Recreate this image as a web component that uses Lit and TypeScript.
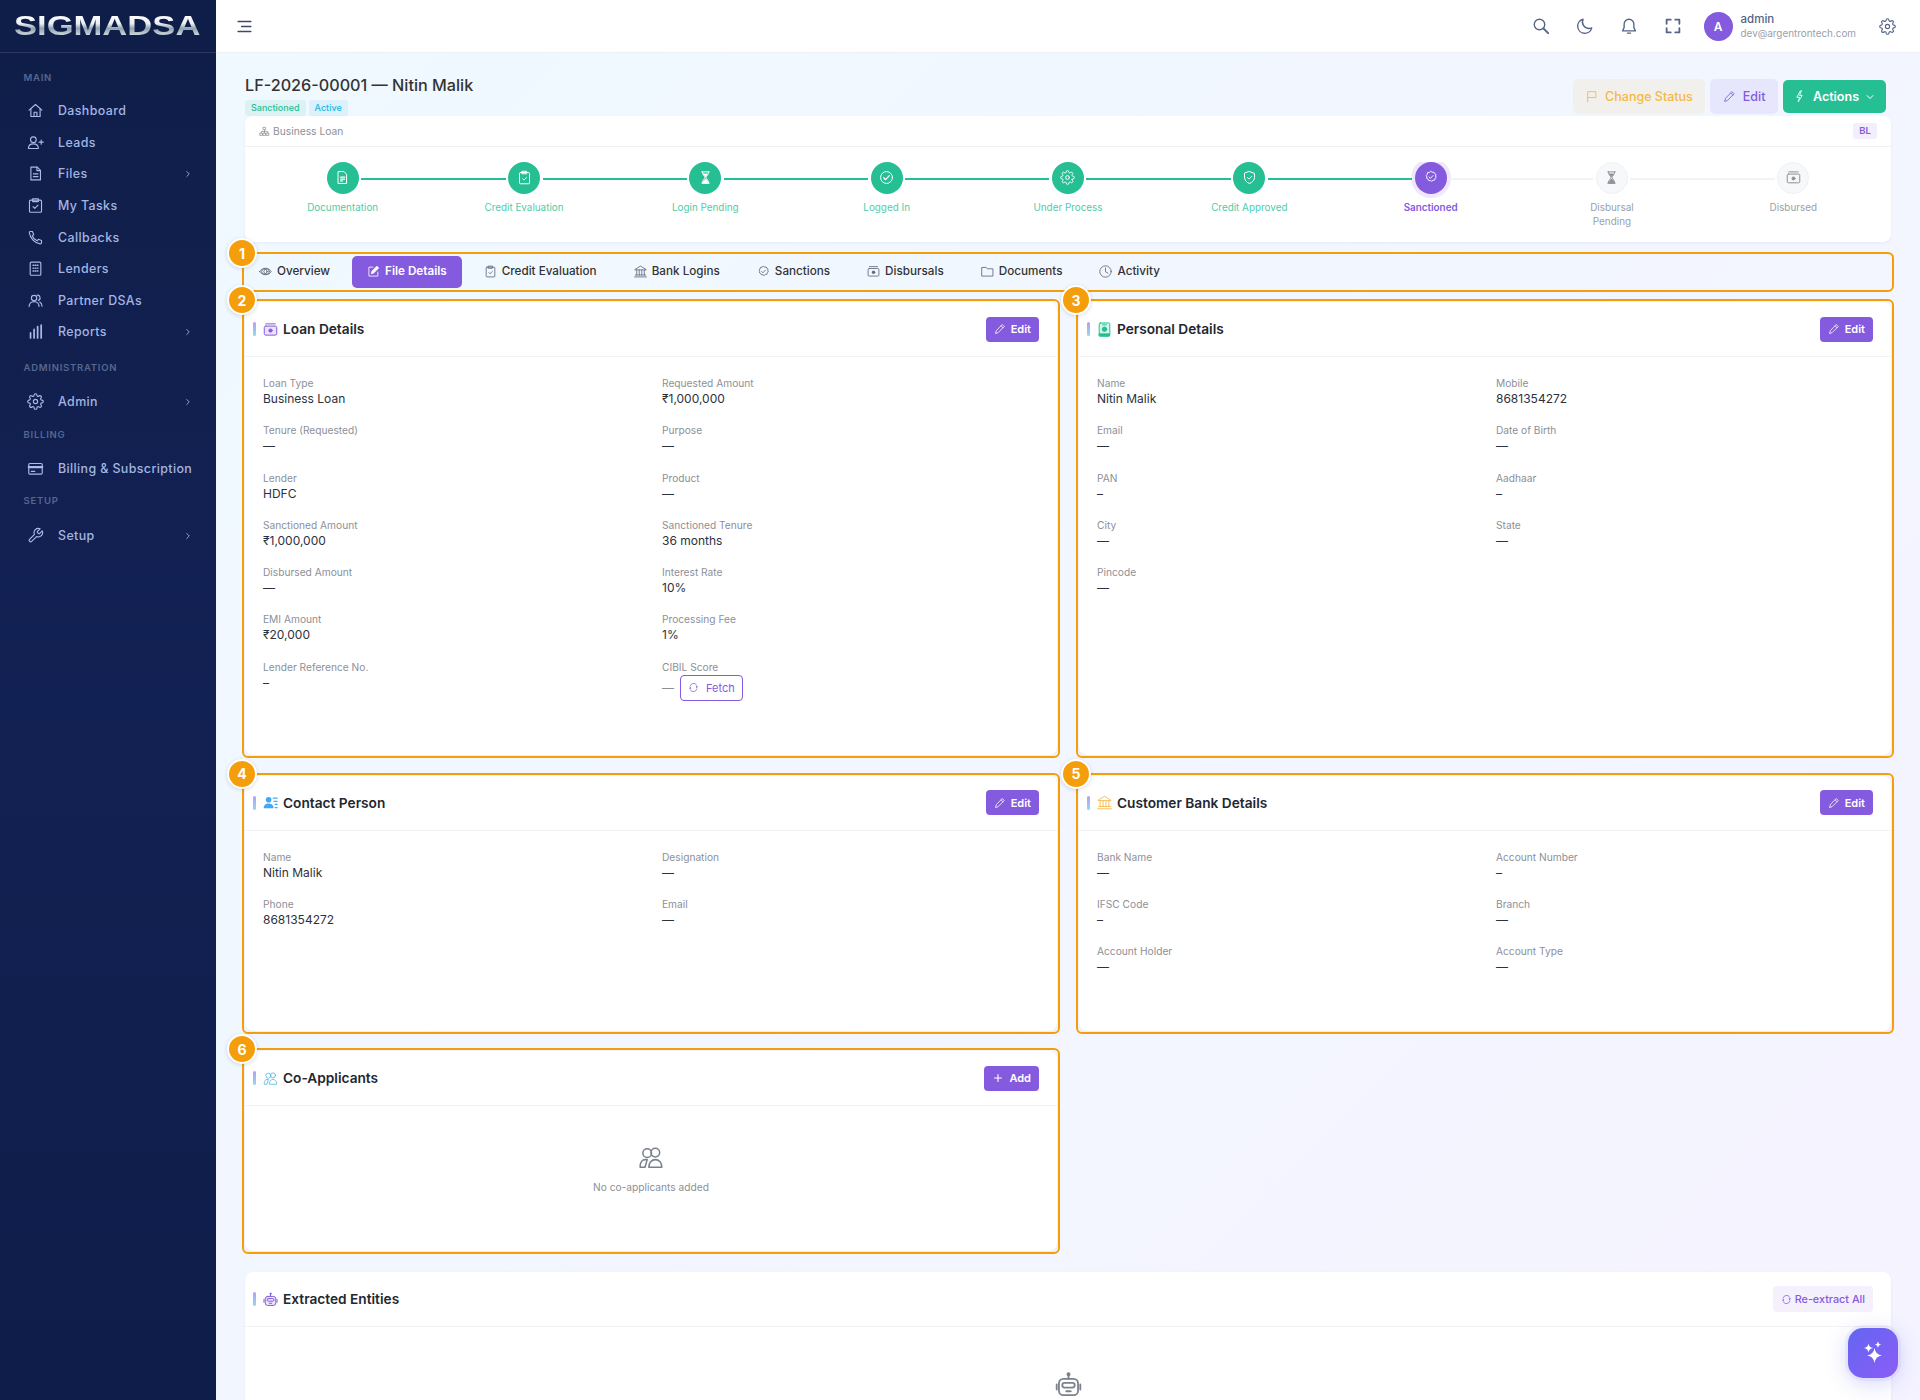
import { LitElement, html, css, svg } from "lit";
import { customElement } from "lit/decorators.js";

const star = (x: number, y: number, r: number) =>
  `M${x} ${y - r}Q${x + r * 0.12} ${y - r * 0.12} ${x + r} ${y}Q${x + r * 0.12} ${y + r * 0.12} ${x} ${y + r}Q${x - r * 0.12} ${y + r * 0.12} ${x - r} ${y}Q${x - r * 0.12} ${y - r * 0.12} ${x} ${y - r}Z`;

const gearPath = "M19.4 15a1.65 1.65 0 0 0 .33 1.82l.06.06a2 2 0 0 1 0 2.83 2 2 0 0 1-2.83 0l-.06-.06a1.65 1.65 0 0 0-1.82-.33 1.65 1.65 0 0 0-1 1.51V21a2 2 0 0 1-2 2 2 2 0 0 1-2-2v-.09A1.65 1.65 0 0 0 9 19.4a1.65 1.65 0 0 0-1.82.33l-.06.06a2 2 0 0 1-2.83 0 2 2 0 0 1 0-2.83l.06-.06a1.65 1.65 0 0 0 .33-1.82 1.65 1.65 0 0 0-1.51-1H3a2 2 0 0 1-2-2 2 2 0 0 1 2-2h.09A1.65 1.65 0 0 0 4.6 9a1.65 1.65 0 0 0-.33-1.82l-.06-.06a2 2 0 0 1 0-2.83 2 2 0 0 1 2.83 0l.06.06a1.65 1.65 0 0 0 1.82.33H9a1.65 1.65 0 0 0 1-1.51V3a2 2 0 0 1 2-2 2 2 0 0 1 2 2v.09a1.65 1.65 0 0 0 1 1.51 1.65 1.65 0 0 0 1.82-.33l.06-.06a2 2 0 0 1 2.83 0 2 2 0 0 1 0 2.83l-.06.06a1.65 1.65 0 0 0-.33 1.82V9a1.65 1.65 0 0 0 1.51 1H21a2 2 0 0 1 2 2 2 2 0 0 1-2 2h-.09a1.65 1.65 0 0 0-1.51 1z";

const bankIcon = svg`<path d="M1.500 8.500 12 2l10.500 6.500M2.500 9h19M5 9.500v9M9.700 9.500v9M14.300 9.500v9M19 9.500v9M2.500 18.500h19M1 22h22"/>`;
const moneyIcon = svg`<rect x="2" y="6.500" width="20" height="14" rx="2"/><path d="M4.500 3h15"/><circle cx="12" cy="13.500" r="2.400" fill="currentColor"/>`;
const hourglass = svg`<path d="M6 3h12M6 21h12M7 3c0 5 4 6.500 4 9s-4 4-4 9h10c0-5-4-6.500-4-9s4-4 4-9"/><path d="M8.500 20c.5-3 3.500-4.500 3.500-5.500s3 2.500 3.500 5.500zM9 6.500h6c-1 2-2.500 3-3 4-.5-1-2-2-3-4z" fill="currentColor"/>`;
const sealCheck = svg`<path d="M12 2.500l2.300 1.400 2.700-.2 1.100 2.400 2.300 1.400-.5 2.700.9 2.500-2 1.900-.6 2.600-2.700.4-2.100 1.800-2.400-1.300-2.700.1-1.300-2.400-2.400-1.300.2-2.700-1-2.500 1.900-2 .4-2.700 2.700-.5z"/><path d="M8.500 12l2.400 2.400 4.500-4.800"/>`;

const ICONS: Record<string, unknown> = {
  home: svg`<path d="M3 11.500 12 3.500l9 8"/><path d="M5.500 10v10.500h13V10"/><path d="M10 20.500v-6h4v6"/>`,
  userplus: svg`<circle cx="9" cy="8" r="4"/><path d="M2 20.500c0-4 3-6.500 7-6.500s7 2.500 7 6.500z"/><path d="M20 8.500v6M17 11.500h6"/>`,
  file: svg`<path d="M5.500 3h9l4.500 4.500V21h-13.500z"/><path d="M14 3v5h5M9 12.500h6.500M9 16.500h6.500"/>`,
  task: svg`<rect x="3.500" y="4.500" width="17" height="17" rx="1.500"/><path d="M8 2.500h8v4H8zM8.500 13.500l2.500 2.500 4.500-4.500"/>`,
  phone: svg`<path d="M4.500 3.500h3.200l1.800 4.500-2 1.800c1 2.800 3.600 5.500 6.700 6.900l1.900-2.100 4.400 1.700v3.200c0 1-1 1.700-2 1.500C11 19.800 4.300 13 3.300 5.300c-.1-.9.300-1.800 1.200-1.800z"/>`,
  lenders: svg`<rect x="4.500" y="3" width="15" height="18.500" rx="1.500"/><path d="M8.500 7.500h1M11.500 7.500h1M14.500 7.500h1M8.500 11.500h1M11.500 11.500h1M14.500 11.500h1M8.500 15.500h1M11.500 15.500h1M14.500 15.500h1" stroke-width="2"/>`,
  people: svg`<circle cx="10" cy="8.500" r="3.800"/><path d="M3 20.500c0-4 3-7 7-7s7 3 7 7"/><path d="M14 4.500a3.800 3.800 0 0 1 2 7.300M18 14c2 1 3.200 3.400 3.200 6"/>`,
  bars: svg`<path d="M5 21v-7M10 21V9M15 21V5M20 21V3" stroke-width="2.400"/>`,
  gear: svg`<circle cx="12" cy="12" r="3"/><path d="${gearPath}"/>`,
  card: svg`<rect x="2.500" y="5" width="19" height="15" rx="1.500"/><path d="M2.500 10h19" stroke-width="3.200"/><path d="M6 16h5"/>`,
  wrench: svg`<path d="M14.700 6.300a1 1 0 0 0 0 1.400l1.600 1.600a1 1 0 0 0 1.400 0l3.770-3.770a6 6 0 0 1-7.940 7.940l-6.910 6.910a2.120 2.120 0 0 1-3-3l6.910-6.910a6 6 0 0 1 7.940-7.940l-3.760 3.760z"/>`,
  chev: svg`<path d="M9 6l6 6-6 6"/>`,
  chevd: svg`<path d="M6 9l6 6 6-6"/>`,
  eye: svg`<path d="M1.500 12c2.500-4 6-6 10.500-6s8 2 10.500 6c-2.500 4-6 6-10.500 6s-8-2-10.500-6z"/><circle cx="10" cy="12" r="5"/><circle cx="14" cy="12" r="5"/>`,
  editsq: svg`<path d="M11 4H3.500v16.500H20V13"/><path d="M18.500 2.500l3 3L12 15l-4 1 1-4z" fill="currentColor"/>`,
  clip: svg`<rect x="4" y="4" width="16" height="18" rx="1.500"/><path d="M8.500 2h7v4h-7zM9 14l2.200 2.200 4-4.200"/>`,
  bank: bankIcon,
  seal: sealCheck,
  money: moneyIcon,
  loan: svg`<rect x="2" y="6.500" width="20" height="14.500" rx="2.500" fill="currentColor" fill-opacity=".16"/><path d="M4.500 3h15"/><circle cx="12" cy="13.700" r="2.600" fill="currentColor"/>`,
  folder: svg`<path d="M2 4.500h7.500l2 2.500H22v13.500H2z"/>`,
  clock: svg`<circle cx="12" cy="12" r="10.500"/><path d="M12 5.500v7l4.500 2.500"/>`,
  doc: svg`<path d="M5.500 2.500h9l4 4.500v14.500h-13z"/><path d="M9 11.500h6.500M9 14.500h6.500M9 17.500h3" stroke-width="2"/>`,
  hourglass,
  circheck: svg`<circle cx="12" cy="12" r="9.500"/><path d="M7.500 12.500l3 3 6-6.500" stroke-width="2"/>`,
  shield: svg`<path d="M12 2.500 20 5.500v6c0 5-3.500 8.500-8 10-4.500-1.500-8-5-8-10v-6z"/><path d="M8.500 12l2.500 2.500 4.500-4.500"/>`,
  search: svg`<circle cx="10" cy="10" r="7"/><path d="M15.500 15.500 21.500 21.500" stroke-width="2.600"/>`,
  moon: svg`<path d="M9.500 3a9.500 9.500 0 1 0 11.500 11.500c-1.200.6-2.500.8-3.800.8A8.500 8.500 0 0 1 9.500 3z"/>`,
  bell: svg`<path d="M12 3a6.500 6.500 0 0 0-6.500 6.500V14L3.500 18.500h17L18.500 14V9.500A6.500 6.500 0 0 0 12 3z"/><path d="M10 21.500h4"/>`,
  full: svg`<path d="M3.500 9V3.500H9M15 3.500h5.500V9M20.500 15v5.500H15M9 20.500H3.500V15" stroke-width="2.400"/>`,
  flag: svg`<path d="M5 22V3h15v11H5"/>`,
  pencil: svg`<path d="M17 3.500l3.500 3.500L8 19.500l-5 1.500 1.500-5z"/><path d="M14.500 6l3.500 3.500"/>`,
  bolt: svg`<path d="M13.500 2 7 13.500h5L9.500 22 17 10h-5l3.500-8z"/>`,
  sitemap: svg`<rect x="9.500" y="3" width="5" height="5"/><rect x="2.500" y="15.500" width="5" height="5"/><rect x="9.500" y="15.500" width="5" height="5"/><rect x="16.500" y="15.500" width="5" height="5"/><path d="M12 8v7.500M5 15.500V12h14v3.500"/>`,
  refresh: svg`<path d="M4.500 9a8 8 0 0 1 14-3M19.500 15a8 8 0 0 1-14 3"/><path d="M18.500 12.500l2-2.500-2.500-1M5.500 11.500l-2 2.500 2.500 1" stroke-width="2"/>`,
  personal: svg`<rect x="3.500" y="1.500" width="17" height="21" rx="2" fill="#d5f4ea"/><path d="M4 19h16v3.500H4z" fill="currentColor"/><path d="M9 4.500h6" /><circle cx="12" cy="11.500" r="3.500" fill="currentColor"/>`,
  contact: svg`<circle cx="9" cy="7.500" r="4.500" fill="currentColor" stroke="none"/><path d="M1 21c0-5 3-7.500 8-7.500s8 2.500 8 7.500z" fill="currentColor" stroke="none"/><path d="M16.500 5h6M17.500 10h5M19.500 15h3M19.500 20h3" stroke-width="2"/>`,
  users: svg`<circle cx="8.500" cy="7.500" r="4"/><circle cx="16" cy="7" r="4"/><path d="M2 20.500v-1.500c0-3 2-5.500 4.500-5.500h2l-2 7zM10 20.500c0-4 2.500-7 6-7s6 3 6 7z"/>`,
  robot: svg`<rect x="3.500" y="7" width="17" height="14.500" rx="4" fill="#ede7fb"/><rect x="6.500" y="10.500" width="11" height="4.200" rx="2"/><path d="M10 18h4M12 7V3.500M1.500 12v4.500M22.500 12v4.500"/><circle cx="12" cy="2.800" r="1" fill="currentColor"/>`,
  robotg: svg`<rect x="3.500" y="7" width="17" height="14.500" rx="4"/><rect x="6.500" y="10.500" width="11" height="4.200" rx="2"/><path d="M10 18h4M12 7V3.500M1.500 12v4.500M22.500 12v4.500"/><circle cx="12" cy="2.800" r="1" fill="currentColor"/>`,
  menu: svg`<path d="M3 5h18M8 12h13M3 19h18" stroke-width="2"/>`,
  plus: svg`<path d="M12 5v14M5 12h14" stroke-width="2.200"/>`,
};

const ic = (name: string, cls = "") =>
  html`<svg class="ic ${cls}" viewBox="0 0 24 24" fill="none" stroke="currentColor" stroke-width="1.600" stroke-linecap="round" stroke-linejoin="round" aria-hidden="true">${ICONS[name]}</svg>`;

const NAV = [
  { t: "MAIN", cls: "s0", items: [["home", "Dashboard"], ["userplus", "Leads"], ["file", "Files", 1], ["task", "My Tasks"], ["phone", "Callbacks"], ["lenders", "Lenders"], ["people", "Partner DSAs"], ["bars", "Reports", 1]] },
  { t: "ADMINISTRATION", cls: "s1", items: [["gear", "Admin", 1]] },
  { t: "BILLING", cls: "s2", items: [["card", "Billing & Subscription"]] },
  { t: "SETUP", cls: "s3", items: [["wrench", "Setup", 1]] },
] as { t: string; cls: string; items: [string, string, number?][] }[];

const STEPS = [
  ["doc", "Documentation", "done"], ["clip", "Credit Evaluation", "done"], ["hourglass", "Login Pending", "done"],
  ["circheck", "Logged In", "done"], ["gear", "Under Process", "done"], ["shield", "Credit Approved", "done"],
  ["seal", "Sanctioned", "cur"], ["hourglass", "Disbursal Pending", "todo"], ["money", "Disbursed", "todo"],
];

const TABS: [string, string, boolean?][] = [
  ["eye", "Overview"], ["editsq", "File Details", true], ["clip", "Credit Evaluation"], ["bank", "Bank Logins"],
  ["seal", "Sanctions"], ["money", "Disbursals"], ["folder", "Documents"], ["clock", "Activity"],
];

const D = "—", N = "–";
const LOAN: [string, string][] = [
  ["Loan Type", "Business Loan"], ["Requested Amount", "₹1,000,000"], ["Tenure (Requested)", D], ["Purpose", D],
  ["Lender", "HDFC"], ["Product", D], ["Sanctioned Amount", "₹1,000,000"], ["Sanctioned Tenure", "36 months"],
  ["Disbursed Amount", D], ["Interest Rate", "10%"], ["EMI Amount", "₹20,000"], ["Processing Fee", "1%"],
  ["Lender Reference No.", N],
];
const PERSONAL: [string, string][] = [
  ["Name", "Nitin Malik"], ["Mobile", "8681354272"], ["Email", D], ["Date of Birth", D], ["PAN", N], ["Aadhaar", N],
  ["City", D], ["State", D], ["Pincode", D],
];
const CONTACT: [string, string][] = [["Name", "Nitin Malik"], ["Designation", D], ["Phone", "8681354272"], ["Email", D]];
const BANK: [string, string][] = [
  ["Bank Name", D], ["Account Number", N], ["IFSC Code", N], ["Branch", D], ["Account Holder", D], ["Account Type", D],
];

@customElement("app-root")
export class AppRoot extends LitElement {
  static styles = css`
    :host { display: block; height: 100vh; overflow: hidden; font-family: Inter, "Noto Sans", sans-serif; color: #333; }
    * { box-sizing: border-box; }
    .ic { width: 1em; height: 1em; flex: none; display: block; }
    .app { display: flex; height: 100%; }

    .side { width: 216px; flex: none; background: linear-gradient(180deg, #0f1e48 0%, #122153 45%, #0f1d4a 100%); color: #a4b5e2; }
    .logo { height: 53px; display: flex; align-items: center; padding-left: 14px; border-bottom: 1px solid rgba(255,255,255,.12); overflow: hidden; }
    .logo span { font-family: "Liberation Sans", sans-serif; font-weight: 700; font-size: 28px; line-height: 30px; display: inline-block; transform: scaleX(1.235); transform-origin: left center;
      background: linear-gradient(180deg, #ffffff 12%, #e9eef2 42%, #8fa2b0 58%, #e3e8ec 88%); -webkit-background-clip: text; background-clip: text; color: transparent; }
    .sec { font-size: 9.5px; font-weight: 600; letter-spacing: .75px; color: #56678f; height: 15px; line-height: 15px; padding-left: 23.500px; margin-bottom: 10px; }
    .s0 { margin-top: 17px; }
    .s1 { margin-top: 12px; margin-bottom: 11px; }
    .s2 { margin-top: 10px; }
    .s3 { margin-top: 9px; margin-bottom: 12px; }
    .nav { height: 31.6px; display: flex; align-items: center; padding-left: 27px; padding-right: 23px; font-size: 12.4px; letter-spacing: .4px; font-weight: 500; white-space: nowrap; }
    .nav .ic { font-size: 17px; margin-right: 14px; color: #a9bbe9; }
    .nav .lbl { flex: 1; }
    .nav .chev { font-size: 10px; margin: 0; stroke-width: 2; }

    .right { flex: 1; min-width: 0; display: flex; flex-direction: column; }
    .top { height: 53px; flex: none; background: #fff; border-bottom: 1px solid #eef0f4; display: flex; align-items: center; padding: 0 24px 0 20px; color: #536485; }
    .top .burger { font-size: 17px; margin-right: auto; color: #3c4a68; }
    .top .ti { font-size: 18px; margin-left: 26px; stroke-width: 1.8; }
    .top .ti.first { margin-left: 0; }
    .avatar { width: 29px; height: 29px; border-radius: 50%; background: #845adf; color: #fff; display: flex; align-items: center; justify-content: center; font-size: 12px; font-weight: 600; margin-left: 22px; }
    .who { margin-left: 8px; display: flex; flex-direction: column; gap: 1px; }
    .who b { font-size: 11.5px; line-height: 14px; font-weight: 500; color: #536485; }
    .who small { font-size: 9.9px; line-height: 13px; color: #9aa0ab; }
    .top .cog { font-size: 17px; margin-left: 23px; }

    .main { flex: 1; overflow: hidden; background: linear-gradient(135deg, #f0f9ff 0%, #f5f3ff 100%); padding: 21px 29px 0; }
    .head { display: flex; justify-content: space-between; padding-right: 5px; }
    h1 { margin: 0; font-size: 16.2px; font-weight: 500; line-height: 22px; color: #333; }
    .badges { display: flex; gap: 3px; margin-top: 4px; }
    .bdg { font-size: 9px; line-height: 16px; height: 16px; padding: 0 6px; border-radius: 3px; font-weight: 500; }
    .bdg.g { background: rgba(38,191,148,.1); color: #26bf94; }
    .bdg.b { background: rgba(35,183,229,.1); color: #23b7e5; }
    .acts { display: flex; gap: 5px; align-items: center; margin-top: 5px; height: 35px; }
    .btn { display: inline-flex; align-items: center; height: 35px; padding: 0 12.5px; border-radius: 5px; font-size: 12.5px; font-weight: 500; gap: 7px; white-space: nowrap; }
    .btn .ic { font-size: 13px; }
    .btn.w { background: rgba(245,184,73,.1); color: #f5b849; }
    .btn.p { background: rgba(132,90,223,.1); color: #845adf; }
    .btn.s { background: #26bf94; color: #fff; font-weight: 600; height: 33px; padding: 0 10px; }
    .btn.s .cd { font-size: 12px; stroke-width: 2; margin-left: -2px; }

    .card { background: #fff; border-radius: 8px; box-shadow: 0 1px 3px rgba(30,40,80,.06); }
    .pipe-top { height: 31px; display: flex; align-items: center; justify-content: space-between; padding: 0 14px; border-bottom: 1px solid #f0f1f4; font-size: 10.25px; color: #8c9097; }
    .pipe-top .l { display: flex; align-items: center; gap: 3px; }
    .pipe-top .ic { font-size: 11px; }
    .bl { background: rgba(132,90,223,.1); color: #845adf; font-weight: 600; font-size: 9.5px; height: 16px; line-height: 16px; padding: 0 6px; border-radius: 3px; }
    .pipe { padding: 15px 7px 13.500px; }
    .steps { display: flex; overflow: hidden; }
    .step { flex: 1; display: flex; flex-direction: column; align-items: center; min-width: 0; }
    .rail { display: flex; align-items: center; width: 100%; }
    .line { flex: 1; height: 2px; background: #f2f3f5; margin-top: 1px; }
    .line.on { background: #26bf94; }
    .line.off { visibility: hidden; }
    .dot { width: 32px; height: 32px; border-radius: 50%; margin: 0 2.500px; display: flex; align-items: center; justify-content: center; font-size: 15px; flex: none; }
    .dot .ic { margin-bottom: 2px; }
    .done .dot { background: #26bf94; color: #fff; }
    .cur .dot { background: #845adf; color: #fff; box-shadow: 0 0 0 4px rgba(132,90,223,.14); }
    .cur .dot .ic { font-size: 14px; }
    .todo .dot { background: #f7f8f9; color: #8c9097; border: 1px solid #eff0f3; }
    .slabel { font-size: 9.9px; line-height: 13.500px; margin-top: 7px; text-align: center; max-width: 72px; }
    .done .slabel { color: #4fcca9; max-width: 90px; }
    .cur .slabel { color: #845adf; font-weight: 600; }
    .todo .slabel { color: #9aa0ab; }

    .zone { position: relative; }
    .zone > .card { height: 100%; }
    .anno { position: absolute; inset: -3px; border: 2px solid #f59e0b; border-radius: 6px; pointer-events: none; z-index: 2; }
    .num { position: absolute; left: -17px; top: -16px; width: 30px; height: 30px; border-radius: 50%; background: #f59e0b; border: 2px solid #fff; color: #fff; font-size: 14px; font-weight: 700; display: flex; align-items: center; justify-content: center; box-shadow: 0 1px 4px rgba(0,0,0,.14); }

    .tabzone { margin-top: 13.500px; }
    .tabs { display: flex; gap: 7px; padding: 1px 0; margin-left: -1px; height: 34px; }
    .tab { display: flex; align-items: center; gap: 5px; height: 32px; padding: 0 15px 2px; border-radius: 5px; font-size: 11.7px; font-weight: 500; color: #333; white-space: nowrap; }
    .tab .ic { font-size: 13px; color: #5a6478; stroke-width: 1.5; }
    .tab.on { background: #845adf; color: #fff; font-weight: 600; }
    .tab.on .ic { color: #fff; }

    .grid { display: grid; grid-template-columns: 1fr 1fr; column-gap: 22px; row-gap: 20.500px; margin-top: 13px; }
    .panel-head { height: 55px; display: flex; align-items: center; padding: 0 18px; border-bottom: 1px solid #f2f3f5; }
    .bar { width: 3px; height: 14px; border-radius: 2px; background: linear-gradient(180deg, #b79cf0, #8fdcf0); margin-left: -10px; margin-right: 7px; }
    .ti-ic { font-size: 15px; margin-right: 5px; }
    .purple { color: #845adf; } .green { color: #26bf94; } .blue { color: #3fa9f5; } .orange { color: #f5b849; stroke-width: 1.4; } .cyan { color: #4db8e8; stroke-width: 1.3; }
    .panel-head h3 { margin: 0; font-size: 13.700px; font-weight: 600; color: #23272f; flex: 1; line-height: 18px; }
    .pbtn { display: inline-flex; align-items: center; gap: 5px; height: 25px; padding: 0 8px; border-radius: 4px; background: #845adf; color: #fff; font-size: 11px; font-weight: 600; }
    .pbtn .ic { font-size: 12px; }
    .fields { display: grid; grid-template-columns: 1fr 1fr; column-gap: 22px; row-gap: 16.300px; padding: 19px 18px 55.400px; }
    .fields.loan { padding-bottom: 54.500px; }
    .f .k { font-size: 10.2px; line-height: 14px; color: #8c9097; }
    .f .v { font-size: 12px; line-height: 16px; color: #2c3240; margin-top: 1px; }
    .cibil { display: flex; align-items: center; gap: 6px; height: 26px; margin-top: 1px; color: #8c9097; font-size: 12px; }
    .fetch { display: inline-flex; align-items: center; gap: 7px; height: 26px; padding: 0 7px; border: 1px solid #845adf; border-radius: 4px; color: #845adf; font-size: 11px; }
    .fetch .ic { font-size: 11px; }
    .empty { height: 145px; display: flex; flex-direction: column; align-items: center; padding-top: 39px; color: #8c9097; font-size: 10.2px; }
    .empty .ic { font-size: 26px; margin-bottom: 10px; color: #7b818c; stroke-width: 1.4; }
    .ext { margin-top: 21px; height: 200px; }
    .ext .rebtn { display: inline-flex; align-items: center; gap: 3px; height: 26px; padding: 0 8px; border-radius: 4px; background: rgba(132,90,223,.09); color: #845adf; font-size: 10.8px; font-weight: 500; }
    .ext .rebtn .ic { font-size: 11px; }
    .ext-body { display: flex; justify-content: center; padding-top: 44px; color: #7b818c; }
    .ext-body .ic { font-size: 27px; }

    .fab { position: fixed; right: 22px; bottom: 22px; width: 50px; height: 50px; border-radius: 15px; background: linear-gradient(135deg, #6366f1, #8b5cf6); box-shadow: 0 0 0 3px rgba(99,102,241,.07), 0 5px 22px rgba(99,102,241,.28); display: flex; align-items: center; justify-content: center; z-index: 5; }
    .fab svg { width: 26px; height: 26px; display: block; }
  `;

  private fields(list: [string, string][]) {
    return list.map(([k, v]) => html`<div class="f"><div class="k">${k}</div><div class="v">${v}</div></div>`);
  }

  private panel(n: number, icon: string, color: string, title: string, body: unknown, btn = "Edit") {
    return html`<div class="zone">
      <div class="card">
        <div class="panel-head">
          <span class="bar"></span>
          ${ic(icon, `ti-ic ${color}`)}
          <h3>${title}</h3>
          <span class="pbtn">${ic(btn === "Edit" ? "pencil" : "plus")}${btn}</span>
        </div>
        ${body}
      </div>
      <div class="anno"><span class="num">${n}</span></div>
    </div>`;
  }

  render() {
    return html`<div class="app">
      <aside class="side">
        <div class="logo"><span>SIGMADSA</span></div>
        ${NAV.map((s) => html`
          <div class="sec ${s.cls}">${s.t}</div>
          ${s.items.map(([i, t, c]) => html`<div class="nav">${ic(i)}<span class="lbl">${t}</span>${c ? ic("chev", "chev") : ""}</div>`)}
        `)}
      </aside>
      <div class="right">
        <header class="top">
          ${ic("menu", "burger")}
          ${ic("search", "ti first")}${ic("moon", "ti")}${ic("bell", "ti")}${ic("full", "ti")}
          <div class="avatar">A</div>
          <div class="who"><b>admin</b><small>dev@argentrontech.com</small></div>
          ${ic("gear", "cog")}
        </header>
        <main class="main">
          <div class="head">
            <div>
              <h1>LF-2026-00001 — Nitin Malik</h1>
              <div class="badges"><span class="bdg g">Sanctioned</span><span class="bdg b">Active</span></div>
            </div>
            <div class="acts">
              <span class="btn w">${ic("flag")}Change Status</span>
              <span class="btn p">${ic("pencil")}Edit</span>
              <span class="btn s">${ic("bolt")}Actions${ic("chevd", "cd")}</span>
            </div>
          </div>
          <section class="card">
            <div class="pipe-top"><span class="l">${ic("sitemap")}Business Loan</span><span class="bl">BL</span></div>
            <div class="pipe"><div class="steps">
              ${STEPS.map(([i, t, st], idx) => html`<div class="step ${st}">
                <div class="rail">
                  <span class="line ${idx === 0 ? "off" : st === "todo" ? "" : "on"}"></span>
                  <span class="dot">${ic(i)}</span>
                  <span class="line ${idx === 8 ? "off" : st === "done" ? "on" : ""}"></span>
                </div>
                <div class="slabel">${t}</div>
              </div>`)}
            </div></div>
          </section>
          <div class="zone tabzone">
            <nav class="tabs">
              ${TABS.map(([i, t, on]) => html`<span class="tab ${on ? "on" : ""}">${ic(i)}${t}</span>`)}
            </nav>
            <div class="anno"><span class="num">1</span></div>
          </div>
          <div class="grid">
            ${this.panel(2, "loan", "purple", "Loan Details", html`<div class="fields loan">
              ${this.fields(LOAN)}
              <div class="f"><div class="k">CIBIL Score</div><div class="cibil">${D}<span class="fetch">${ic("refresh")}Fetch</span></div></div>
            </div>`)}
            ${this.panel(3, "personal", "green", "Personal Details", html`<div class="fields">${this.fields(PERSONAL)}</div>`)}
            ${this.panel(4, "contact", "blue", "Contact Person", html`<div class="fields">${this.fields(CONTACT)}</div>`)}
            ${this.panel(5, "bank", "orange", "Customer Bank Details", html`<div class="fields">${this.fields(BANK)}</div>`)}
            ${this.panel(6, "users", "cyan", "Co-Applicants", html`<div class="empty">${ic("users")}No co-applicants added</div>`, "Add")}
          </div>
          <section class="card ext">
            <div class="panel-head">
              <span class="bar"></span>
              ${ic("robot", "ti-ic purple")}
              <h3>Extracted Entities</h3>
              <span class="rebtn">${ic("refresh")}Re-extract All</span>
            </div>
            <div class="ext-body">${ic("robotg")}</div>
          </section>
        </main>
      </div>
      <div class="fab"><svg viewBox="0 0 26 26" fill="#fff" aria-hidden="true"><path d="${star(14.5, 15.5, 7.5)}"/><path d="${star(8.5, 8, 4.6)}"/><path d="${star(18, 4.6, 3.1)}"/></svg></div>
    </div>`;
  }
}
